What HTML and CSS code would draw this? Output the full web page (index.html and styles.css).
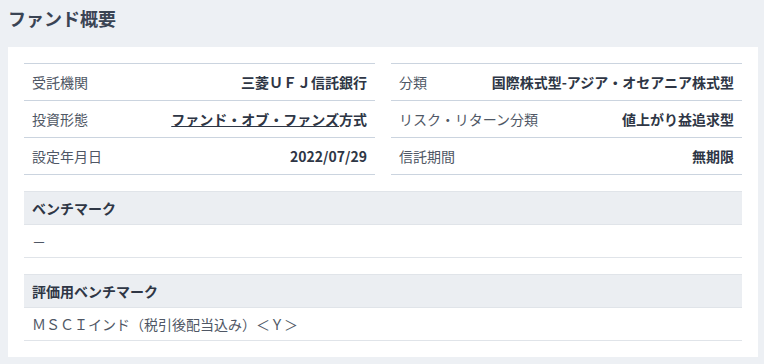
FILE: index.html
```html
<!DOCTYPE html>
<html lang="ja">
  <head>
    <meta charset="UTF-8" />
    <meta name="viewport" content="width=device-width, initial-scale=1.0" />
    <title>ファンド概要</title>
    <link rel="stylesheet" href="styles.css">
  </head>
  <body>
    <div class="page">
      <h2 class="page-title">ファンド概要</h2>
      <div class="card">
        <div class="spec-grid">
          <dl class="spec-list">
            <div class="spec-row">
              <dt>受託機関</dt>
              <dd>三菱ＵＦＪ信託銀行</dd>
            </div>
            <div class="spec-row">
              <dt>投資形態</dt>
              <dd><a href="#" class="spec-link">ファンド・オブ・ファンズ</a>方式</dd>
            </div>
            <div class="spec-row">
              <dt>設定年月日</dt>
              <dd>2022/07/29</dd>
            </div>
          </dl>
          <dl class="spec-list">
            <div class="spec-row">
              <dt>分類</dt>
              <dd>国際株式型-アジア・オセアニア株式型</dd>
            </div>
            <div class="spec-row">
              <dt>リスク・リターン分類</dt>
              <dd>値上がり益追求型</dd>
            </div>
            <div class="spec-row">
              <dt>信託期間</dt>
              <dd>無期限</dd>
            </div>
          </dl>
        </div>

        <div class="bench">
          <div class="bench-head">ベンチマーク</div>
          <div class="bench-body">&#xFF0D;</div>
        </div>
        <div class="bench">
          <div class="bench-head">評価用ベンチマーク</div>
          <div class="bench-body">ＭＳＣＩインド（税引後配当込み）＜Ｙ＞</div>
        </div>
      </div>
    </div>
  </body>
</html>
```

FILE: styles.css
```css
html,
body {
  margin: 0;
  padding: 0;
  background-color: #edf0f4;
  font-family: "Noto Sans CJK JP", "Noto Sans", sans-serif;
  color: #3a4250;
}

.page {
  padding: 0 6px 7px 8px;
}

.page-title {
  margin: 6px 0 17px;
  font-size: 18px;
  line-height: 24px;
  font-weight: 700;
  color: #3a4454;
}

.card {
  background-color: #ffffff;
  padding: 16px;
}

.spec-grid {
  display: grid;
  grid-template-columns: 1fr 1fr;
  gap: 16px;
}

.spec-list {
  margin: 0;
  border-top: 1px solid #cbd4df;
}

.spec-row {
  display: flex;
  justify-content: space-between;
  align-items: center;
  height: 36px;
  padding: 0 8px;
  border-bottom: 1px solid #cbd4df;
  font-size: 14px;
  line-height: 20px;
}

.spec-row dt {
  color: #4f5765;
}

.spec-row dd {
  margin: 0;
  font-weight: 700;
  color: #2e3645;
  text-align: right;
}

.spec-link {
  color: #2e3645;
  text-decoration: underline;
}

.bench {
  margin-top: 16px;
  font-size: 14px;
  line-height: 20px;
}

.bench-head {
  height: 32px;
  padding: 0 8px;
  display: flex;
  align-items: center;
  background-color: #ebeef2;
  border-top: 1px solid #e0e4e9;
  border-bottom: 1px solid #e0e4e9;
  font-weight: 700;
  color: #2e3645;
}

.bench-body {
  height: 32px;
  padding: 0 8px;
  display: flex;
  align-items: center;
  border-bottom: 1px solid #e0e4e9;
  color: #4f5765;
}
```
